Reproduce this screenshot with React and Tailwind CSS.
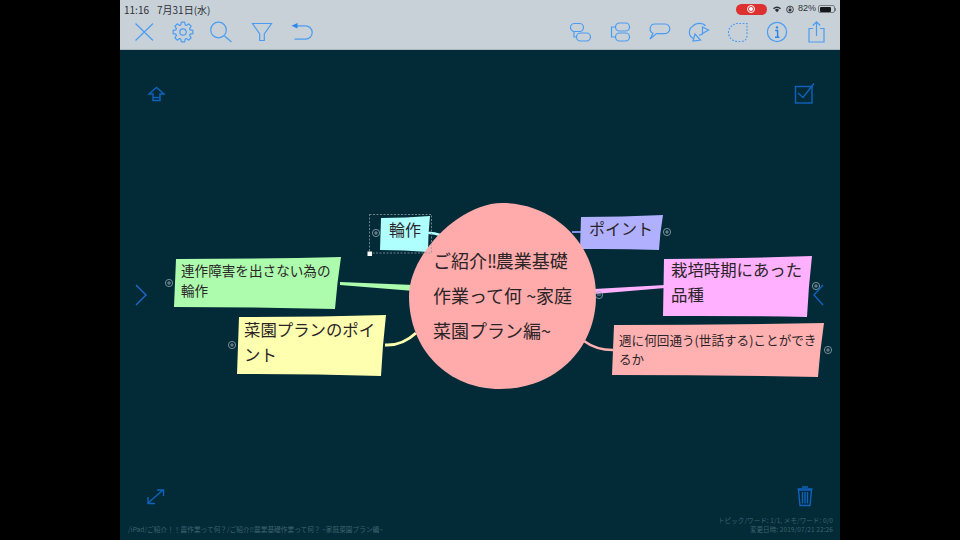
const JP = "font-['Noto_Sans_CJK_JP',sans-serif]";

function Icon({ children, fill = "none", stroke = "#4a9cf2", w = 1.2 }) {
  return (
    <div className="flex w-[39.4px] justify-center">
      <svg width="32" height="32" viewBox="0 0 32 32" fill={fill} stroke={stroke} strokeWidth={w}>
        {children}
      </svg>
    </div>
  );
}

// gear outline built from eight teeth
function gearPath() {
  const pts = [];
  for (let i = 0; i < 8; i++) {
    const a = (i * Math.PI) / 4 - Math.PI / 2;
    [[-0.3, 7.4], [-0.17, 10], [0.17, 10], [0.3, 7.4]].forEach(([da, r]) => {
      pts.push(`${(16 + r * Math.cos(a + da)).toFixed(2)} ${(16 + r * Math.sin(a + da)).toFixed(2)}`);
    });
  }
  return `M${pts.join(" L")} Z`;
}

function StatusBar() {
  return (
    <div className={`flex h-[16px] items-center justify-between pl-1 pr-1 pt-[2px] text-[10px] text-[#2b3036] ${JP}`}>
      <div className="flex gap-2">
        <span>11:16</span>
        <span>7月31日(水)</span>
      </div>
      <div className="flex items-center">
        <div className="mr-[6px] flex h-[11px] w-[31px] items-center justify-center rounded-full bg-[#dd3030]">
          <div className="flex h-[8px] w-[8px] items-center justify-center rounded-full border border-white">
            <div className="h-[4px] w-[4px] rounded-full bg-white" />
          </div>
        </div>
        <svg width="8" height="8" viewBox="0 0 10 8" className="mr-[5px]">
          <path d="M0 3 A7 7 0 0 1 10 3 L8.6 4.4 A5 5 0 0 0 1.4 4.4 Z M2.4 5.2 A3.6 3.6 0 0 1 7.6 5.2 L5 8 Z" fill="#2b3036" />
        </svg>
        <svg width="8" height="9" viewBox="0 0 9 9" className="mr-[4px]">
          <circle cx="4.5" cy="4.5" r="3.8" fill="none" stroke="#2b3036" />
          <rect x="3" y="4" width="3" height="2.6" fill="#2b3036" />
          <path d="M3.5 4V3a1 1 0 0 1 2 0v1" fill="none" stroke="#2b3036" strokeWidth="0.7" />
        </svg>
        <span className="mr-[2px] font-['Liberation_Sans',sans-serif] text-[9px]">82%</span>
        <div className="flex h-[8px] w-[17px] rounded-[2px] border border-[#777d82] p-[0.5px]">
          <div className="h-full w-[82%] rounded-[1px] bg-[#15181a]" />
        </div>
        <div className="h-[3px] w-[1px] bg-[#777d82]" />
      </div>
    </div>
  );
}

function Toolbar() {
  return (
    <div className="flex h-[32px] items-center justify-between px-1">
      <div className="flex">
        <Icon>
          <path d="M7.5 7.5 L25 24.5 M25 7.5 L7.5 24.5" />
        </Icon>
        <Icon>
          <path d={gearPath()} strokeLinejoin="round" />
          <circle cx="16" cy="16" r="3.2" />
        </Icon>
        <Icon>
          <circle cx="12.5" cy="15" r="7.8" transform="translate(0 -1)" />
          <path d="M18.5 20 L25.5 26" />
        </Icon>
        <Icon>
          <path d="M6.5 7.5 H25.5 L18.3 18 V24.5 H13.7 V18 Z" />
        </Icon>
        <Icon>
          <path d="M9 9.8 H20.5 A6.2 6.2 0 0 1 20.5 23.2 H9.5" />
          <path d="M6.5 9.8 L12.5 7 V12.6 Z" fill="#2f86ea" stroke="none" />
        </Icon>
      </div>
      <div className="flex">
        <Icon>
          <rect x="6.5" y="7.5" width="13" height="8" rx="4" />
          <rect x="12.5" y="17" width="14" height="8" rx="4" />
          <path d="M10 15.5 V21 H12.5" />
        </Icon>
        <Icon>
          <rect x="12.5" y="7" width="14" height="8" rx="4" />
          <rect x="12.5" y="17" width="14" height="8" rx="4" />
          <path d="M12.5 11 H8.5 V21 H12.5" />
        </Icon>
        <Icon>
          <path d="M12 8 H22 A4.8 4.8 0 0 1 22 17.6 H13.5 L7 23 L10 17.2 A4.8 4.8 0 0 1 12 8 Z" />
        </Icon>
        <Icon>
          <path d="M11.5 22.5 A7 7 0 0 1 11 10 C14 6.5 21 6.5 23.5 10" />
          <path d="M20.5 11 L26.5 14 L20.5 17.5 Z" />
          <path d="M13 18 L11 25 L18.5 24 Z" />
          <path d="M17 19 A5 5 0 0 0 21 17.5" />
        </Icon>
        <Icon>
          <path d="M14 7.5 H25 V19 Q25 25.5 19 25.5 H15 Q6.5 24 6.5 16 Q7 10 14 7.5 Z" strokeDasharray="1.8 1.5" />
        </Icon>
        <Icon>
          <circle cx="16" cy="16" r="9.6" />
          <circle cx="16" cy="11.4" r="1.2" fill="#2f86ea" stroke="none" />
          <path d="M14.2 14.5 H16.6 V21 M14 21.2 H18.4" stroke="#2f86ea" strokeWidth="1.5" />
        </Icon>
        <Icon>
          <path d="M13 12.5 H9 V26 H24 V12.5 H20" />
          <path d="M16.5 20 V6 M12.8 9.5 L16.5 5.8 L20.2 9.5" />
        </Icon>
      </div>
    </div>
  );
}

// hand drawn looking box from four corners
function blob([a, b, c, d]) {
  const mid = (p, q, dx, dy) => `${(p[0] + q[0]) / 2 + dx} ${(p[1] + q[1]) / 2 + dy}`;
  return `M${a[0]} ${a[1]} Q${mid(a, b, 0, 1)} ${b[0]} ${b[1]} Q${mid(b, c, -1, 0)} ${c[0]} ${c[1]} Q${mid(c, d, 0, -1)} ${d[0]} ${d[1]} Q${mid(d, a, 0, 0)} ${a[0]} ${a[1]} Z`;
}

const nodes = [
  { color: "#adfcad", pts: [[176, 259], [341, 257], [335, 309], [174, 307]] },
  { color: "#ffffb0", pts: [[239, 317], [386, 315], [381, 376], [237, 374]] },
  { color: "#b0ffff", pts: [[381, 218], [430, 216], [428, 252], [380, 250]] },
  { color: "#b0b0ff", pts: [[581, 217], [663, 215], [659, 250], [580, 249]] },
  { color: "#ffb0ff", pts: [[664, 259], [812, 256], [807, 317], [663, 316]] },
  { color: "#ffb0b0", pts: [[614, 325], [824, 323], [818, 377], [612, 375]] },
];

const toggles = [
  [376, 233, true],
  [169, 283, true],
  [232, 345, true],
  [667, 232, true],
  [816, 286, true],
  [599, 295, false],
  [828, 350, true],
];

function MapDrawing() {
  return (
    <svg className="absolute inset-0" width="720" height="490" viewBox="120 50 720 490">
      <path d="M428 233 Q438 232 448 240" fill="none" stroke="#b0ffff" strokeWidth="2.5" />
      <path d="M340 282 L414 285 L414 291 L340 285 Z" fill="#adfcad" />
      <path d="M385 345 Q402 346 416 333" fill="none" stroke="#ffffb0" strokeWidth="3" />
      <path d="M572 232 H582" fill="none" stroke="#7f8ee8" strokeWidth="2" />
      <path d="M594 289 L665 285 L665 288 L594 294 Z" fill="#ffb0ff" />
      <path d="M584 341 Q596 350 613 350" fill="none" stroke="#ffb0b0" strokeWidth="2.5" />

      {nodes.map((n) => (
        <path key={n.color} d={blob(n.pts)} fill={n.color} />
      ))}
      <path d="M502 203 C554 203 596 244 596 296 C596 350 554 389 500 389 C448 389 409 350 409 296 C409 254 460 203 502 203 Z" fill="#ffabab" />

      <rect x="369.5" y="214.5" width="62" height="38.5" fill="none" stroke="#8b9aa3" strokeWidth="0.8" strokeDasharray="2 1.5" />
      <rect x="367.5" y="251.5" width="4.5" height="4.5" fill="#fff" />

      {toggles.map(([x, y, plus]) => (
        <g key={`${x}-${y}`} fill="none" stroke="#93a6ad" strokeWidth="0.8">
          <circle cx={x} cy={y} r="3.6" />
          <path d={plus ? `M${x - 2} ${y} H${x + 2} M${x} ${y - 2} V${y + 2}` : `M${x - 2} ${y} H${x + 2}`} />
        </g>
      ))}

      {/* corner controls */}
      <g fill="none" stroke="#0f62bd" strokeWidth="1.4">
        <path d="M149 94 L156.5 87.5 L164 94 H160 V100.5 H153 V94 Z" />
        <path d="M153 97.5 H160" />
        <rect x="795.5" y="86.5" width="16.5" height="16.5" />
        <path d="M798 93 L803 97.5 L814 83.5" />
        <path d="M148 503 L163 490 M148 497 V503.5 H155 M157 490 H163.5 V496" />
        <path d="M136 285 L146 295 L136 305" stroke="#1a6ccc" />
        <path d="M823 285 L814 295 L823 305" />
        <path d="M798.5 490 H811.5 L810 505.5 H800 Z" />
        <path d="M797.5 489 H812.5 M802 487 H808 M802.5 492 V503.5 M805 492 V503.5 M807.5 492 V503.5" />
      </g>
    </svg>
  );
}

function Label({ className, lines }) {
  return (
    <div className={`absolute whitespace-nowrap text-[#2b2427] ${JP} ${className}`}>
      {lines.map((l, i) => (
        <div key={i}>{l}</div>
      ))}
    </div>
  );
}

export default function App() {
  return (
    <div className="flex h-[540px] w-[960px] overflow-hidden bg-black">
      <div className="w-[120px]" />
      <div className="flex w-[720px] flex-col">
        <div className="h-[50px] border-b border-[#a9b8bf] bg-[#c9d1d8]">
          <StatusBar />
          <Toolbar />
        </div>
        <div className="relative flex-1 bg-[#022a37]">
          <MapDrawing />
          <Label
            className="left-[313px] top-[193px] text-[18px] leading-[35px]"
            lines={[
              <>ご紹介<span className="tracking-[-1.5px]">!!</span>農業基礎</>,
              "作業って何 ~家庭",
              "菜園プラン編~",
            ]}
          />
          <Label className="left-[269px] top-[166px] text-[16px] leading-[26px]" lines={["輪作"]} />
          <Label className="left-[469px] top-[165px] text-[16px] leading-[26px]" lines={["ポイント"]} />
          <Label className="left-[61px] top-[210px] text-[13.6px] leading-[20px]" lines={["連作障害を出さない為の", "輪作"]} />
          <Label className="left-[124px] top-[267px] text-[16.4px] leading-[25px]" lines={["菜園プランのポイ", "ント"]} />
          <Label className="left-[551px] top-[207px] text-[16.4px] leading-[25px]" lines={["栽培時期にあった", "品種"]} />
          <Label className="left-[499px] top-[280px] text-[12.6px] leading-[19px]" lines={["週に何回通う(世話する)ことができ", "るか"]} />
          <div className={`absolute bottom-[6px] left-[8px] text-[6.7px] text-[#3f636f] ${JP}`}>
            /iPad/ご紹介！！農作業って何？/ご紹介!!農業基礎作業って何？ ~家庭菜園プラン編~
          </div>
          <div className={`absolute bottom-[6px] right-[7px] text-right text-[6.5px] leading-[9px] tracking-[0.1px] text-[#3f636f] ${JP}`}>
            <div>トピック/ワード: 1/1, メモ/ワード: 0/0</div>
            <div>変更日時: 2019/07/21 22:26</div>
          </div>
        </div>
      </div>
      <div className="w-[120px]" />
    </div>
  );
}
